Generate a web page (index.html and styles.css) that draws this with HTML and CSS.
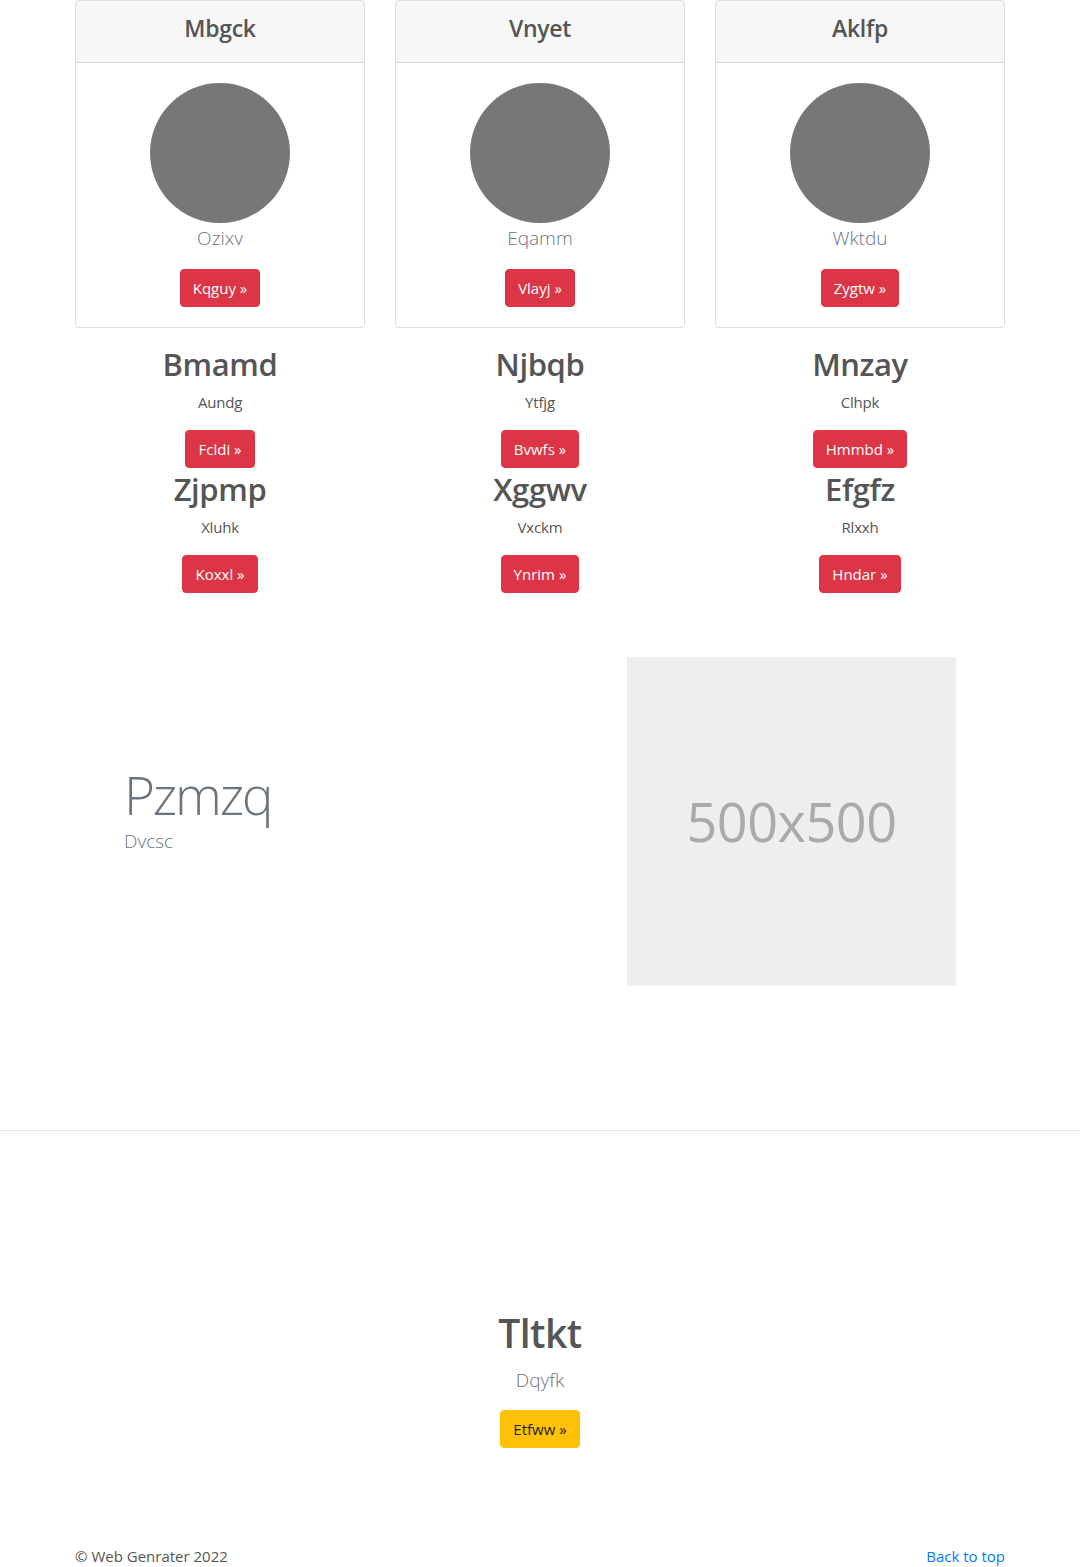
FILE: index.html
```html
<!DOCTYPE html>
<html lang="en">
<head>
<meta charset="utf-8">
<title>Page</title>
<link rel="stylesheet" href="styles.css">
</head>
<body>
<div class="container">
  <div class="row cards">
    <div class="col">
      <div class="card">
        <div class="card-header"><h4>Mbgck</h4></div>
        <div class="card-body">
          <div class="avatar"></div>
          <p class="lead">Ozixv</p>
          <a class="btn btn-danger" href="#">Kqguy »</a>
        </div>
      </div>
    </div>
    <div class="col">
      <div class="card">
        <div class="card-header"><h4>Vnyet</h4></div>
        <div class="card-body">
          <div class="avatar"></div>
          <p class="lead">Eqamm</p>
          <a class="btn btn-danger" href="#">Vlayj »</a>
        </div>
      </div>
    </div>
    <div class="col">
      <div class="card">
        <div class="card-header"><h4>Aklfp</h4></div>
        <div class="card-body">
          <div class="avatar"></div>
          <p class="lead">Wktdu</p>
          <a class="btn btn-danger" href="#">Zygtw »</a>
        </div>
      </div>
    </div>
  </div>

  <div class="row features">
    <div class="col">
      <h2>Bmamd</h2>
      <p>Aundg</p>
      <a class="btn btn-danger" href="#">Fcldi »</a>
      <h2>Zjpmp</h2>
      <p>Xluhk</p>
      <a class="btn btn-danger" href="#">Koxxl »</a>
    </div>
    <div class="col">
      <h2>Njbqb</h2>
      <p>Ytfjg</p>
      <a class="btn btn-danger" href="#">Bvwfs »</a>
      <h2>Xggwv</h2>
      <p>Vxckm</p>
      <a class="btn btn-danger" href="#">Ynrim »</a>
    </div>
    <div class="col">
      <h2>Mnzay</h2>
      <p>Clhpk</p>
      <a class="btn btn-danger" href="#">Hmmbd »</a>
      <h2>Efgfz</h2>
      <p>Rlxxh</p>
      <a class="btn btn-danger" href="#">Hndar »</a>
    </div>
  </div>

  <div class="split">
    <div class="split-text">
      <h1 class="display-4">Pzmzq</h1>
      <p class="lead">Dvcsc</p>
    </div>
    <div class="placeholder">500x500</div>
  </div>
</div>

<hr class="divider">

<div class="container">
  <div class="hero">
    <h1>Tltkt</h1>
    <p class="lead">Dqyfk</p>
    <a class="btn btn-warning" href="#">Etfww »</a>
  </div>

  <footer class="footer">
    <p>© Web Genrater 2022</p>
    <a href="#">Back to top</a>
  </footer>
</div>
</body>
</html>
```

FILE: styles.css
```css
* { box-sizing: border-box; }

html, body {
  margin: 0;
  padding: 0;
}

body {
  font-family: "Open Sans", "Noto Sans", sans-serif;
  font-size: 16px;
  line-height: 1.5;
  color: #555;
  background: #fff;
}

h1, h2, h4 {
  margin: 0 0 8px;
  font-weight: 600;
  line-height: 1.2;
  color: #555;
}

p { margin: 0 0 16px; }

.container {
  width: 960px;
  margin: 0 auto;
  padding: 0 15px;
}

.row {
  display: flex;
  margin: 0 -15px;
}

.col {
  flex: 0 0 33.3333%;
  max-width: 33.3333%;
  padding: 0 15px;
}

/* cards */
.card {
  border: 1px solid rgba(0,0,0,.125);
  border-radius: 4px;
  text-align: center;
  background: #fff;
}

.card-header {
  background: #f7f7f7;
  border-bottom: 1px solid rgba(0,0,0,.125);
  padding: 13px 20px 11px;
  border-radius: 3px 3px 0 0;
}

.card-header h4 {
  font-size: 23px;
  line-height: 29px;
  letter-spacing: -0.3px;
}

.card-body {
  padding: 20px;
}

.avatar {
  width: 140px;
  height: 140px;
  border-radius: 50%;
  background: #777;
  margin: 0 auto;
}

.lead {
  font-size: 19px;
  font-weight: 300;
  color: #6c757d;
  line-height: 30px;
}

.btn {
  display: inline-block;
  font-size: 15px;
  line-height: 24px;
  padding: 6px 12px;
  border-radius: 4px;
  text-decoration: none;
  border: 1px solid transparent;
}

.btn-danger {
  background: #dc3545;
  border-color: #dc3545;
  color: #fff;
}

.btn-warning {
  background: #ffc107;
  border-color: #ffc107;
  color: #212529;
}

/* features */
.features {
  margin-top: 17px;
  text-align: center;
}

.features h2 {
  font-size: 31px;
  line-height: 39px;
  letter-spacing: -0.4px;
  margin: 0 0 6px;
}

.features .btn + h2 {
  margin-top: 2px;
}

.features p {
  font-size: 15px;
  line-height: 24px;
  letter-spacing: -0.2px;
}

/* split */
.split {
  display: flex;
  justify-content: space-between;
  align-items: center;
  padding: 64px 49px 144px;
}

.display-4 {
  font-size: 53px;
  line-height: 64px;
  font-weight: 300;
  color: #6c757d;
  letter-spacing: -2.2px;
  margin: 0;
}

.split-text .lead {
  margin: 0 0 26px;
  line-height: 28px;
}

.placeholder {
  width: 329px;
  height: 329px;
  background: #eee;
  color: #aaa;
  font-size: 54px;
  display: flex;
  align-items: center;
  justify-content: center;
  letter-spacing: -0.5px;
}

.divider {
  margin: 0;
  border: 0;
  border-top: 1px solid #e5e5e5;
}

/* hero */
.hero {
  text-align: center;
  padding-top: 179px;
}

.hero h1 {
  font-size: 39px;
  letter-spacing: -0.5px;
}

.hero .lead {
  margin-bottom: 15px;
}

/* footer */
.footer {
  display: flex;
  justify-content: space-between;
  margin-top: 96px;
  font-size: 15px;
  line-height: 24px;
}

.footer p { margin: 0; }

.footer a {
  color: #007bff;
  text-decoration: none;
}
```
